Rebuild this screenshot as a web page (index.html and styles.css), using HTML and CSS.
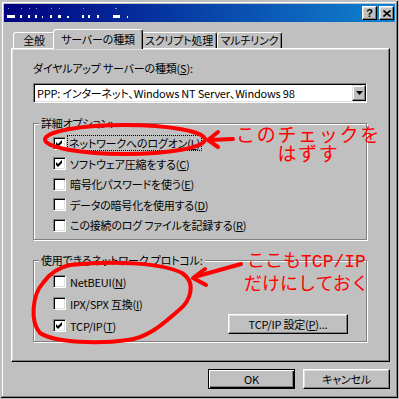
FILE: index.html
```html
<!DOCTYPE html>
<html lang="ja">
<head>
    <meta charset="UTF-8">
    <title>ダイヤルアップ接続のプロパティ</title>
    <link rel="stylesheet" href="styles.css">
</head>
<body>
    <div class="window">
        <!-- title bar, caption is blurred out in the original -->
        <div class="titlebar">
            <svg class="mosaic" width="130" height="14" viewBox="0 0 130 14">
                <g fill="#fff">
                    <rect x="3" y="9" width="8" height="3"/>
                    <rect x="16" y="9" width="2" height="3"/>
                    <rect x="24" y="9" width="2" height="3"/>
                    <rect x="31" y="9" width="2" height="3"/>
                    <rect x="38" y="10" width="1" height="2"/>
                    <rect x="46" y="9" width="2" height="3"/>
                    <rect x="54" y="9" width="3" height="3"/>
                    <rect x="63" y="10" width="2" height="2"/>
                    <rect x="78" y="9" width="2" height="3"/>
                    <rect x="84" y="9" width="2" height="3"/>
                    <rect x="93" y="9" width="2" height="3"/>
                    <rect x="109" y="9" width="7" height="3"/>
                    <rect x="123" y="10" width="1" height="2"/>
                </g>
                <g fill="#7f8fc8">
                    <rect x="4" y="2" width="1" height="1"/>
                    <rect x="17" y="2" width="1" height="1"/>
                    <rect x="25" y="2" width="1" height="1"/>
                    <rect x="32" y="2" width="1" height="1"/>
                    <rect x="47" y="2" width="1" height="1"/>
                    <rect x="55" y="2" width="1" height="1"/>
                    <rect x="79" y="2" width="1" height="1"/>
                    <rect x="111" y="2" width="2" height="1"/>
                </g>
            </svg>
            <div class="title-buttons">
                <span class="tbtn">?</span>
                <span class="tbtn">
                    <svg width="8" height="7" viewBox="0 0 8 7"><path d="M0.5 0.5 L7.5 6.5 M7.5 0.5 L0.5 6.5" stroke="#000" stroke-width="1.6" fill="none"/></svg>
                </span>
            </div>
        </div>

        <div class="content">
            <div class="tabs">
                <div class="tab tab-general">全般</div>
                <div class="tab tab-server active">サーバーの種類</div>
                <div class="tab tab-script">スクリプト処理</div>
                <div class="tab tab-multi">マルチリンク</div>
            </div>

            <div class="panel">
                <div class="field-label">ダイヤルアップ サーバーの種類(<u>S</u>):</div>
                <div class="select">
                    <span class="select-value">PPP: インターネット、Windows NT Server、Windows 98</span>
                    <span class="drop-btn">
                        <svg width="7" height="4" viewBox="0 0 7 4"><polygon points="0,0 7,0 3.5,4" fill="#000"/></svg>
                    </span>
                </div>

                <div class="group">
                    <div class="group-title">詳細オプション:</div>
                    <div class="check-list">
                        <div class="check"><span class="box"><svg width="11" height="11" viewBox="0 0 11 11"><polygon points="2,4 4,6 8,2 8,5 4,9 2,7" fill="#000"/></svg></span><span class="focus">ネットワークへのログオン(<u>L</u>)</span></div>
                        <div class="check"><span class="box"><svg width="11" height="11" viewBox="0 0 11 11"><polygon points="2,4 4,6 8,2 8,5 4,9 2,7" fill="#000"/></svg></span><span>ソフトウェア圧縮をする(<u>C</u>)</span></div>
                        <div class="check"><span class="box"></span><span>暗号化パスワードを使う(<u>E</u>)</span></div>
                        <div class="check"><span class="box"></span><span>データの暗号化を使用する(<u>D</u>)</span></div>
                        <div class="check"><span class="box"></span><span>この接続のログ ファイルを記録する(<u>R</u>)</span></div>
                    </div>
                </div>

                <div class="group group-proto">
                    <div class="group-title">使用できるネットワーク プロトコル:</div>
                    <div class="proto-body">
                        <div class="check-list">
                            <div class="check"><span class="box"></span><span>NetBEUI(<u>N</u>)</span></div>
                            <div class="check"><span class="box"></span><span>IPX/SPX 互換(<u>I</u>)</span></div>
                            <div class="check"><span class="box"><svg width="11" height="11" viewBox="0 0 11 11"><polygon points="2,4 4,6 8,2 8,5 4,9 2,7" fill="#000"/></svg></span><span>TCP/IP(<u>T</u>)</span></div>
                        </div>
                        <div class="btn btn-tcp">TCP/IP 設定(<u>P</u>)...</div>
                    </div>
                </div>
            </div>

            <div class="actions">
                <div class="btn btn-default">OK</div>
                <div class="btn">キャンセル</div>
            </div>
        </div>
    </div>

    <!-- red hand-drawn notes on top of the screenshot -->
    <svg class="marks" width="399" height="399" viewBox="0 0 399 399">
        <g fill="none" stroke="#f00" stroke-width="4" stroke-linecap="round" stroke-linejoin="round">
            <ellipse cx="125" cy="139.5" rx="80" ry="14.5"/>
            <path d="M233 139 L210 140"/>
            <path d="M218 132 L208 140 L218 147"/>
            <path d="M70 265 C110 261 160 262 182 273 C196 282 192 300 178 311 C165 322 150 337 128 340 C100 344 55 343 40 333 C30 322 32 295 43 283 C50 273 60 267 70 265 Z"/>
            <path d="M241 264 L198 276"/>
            <path d="M205 269 L193 278 L206 285"/>
        </g>
    </svg>
    <div class="note note-check">
        <div>このチェックを</div>
        <div>はずす</div>
    </div>
    <div class="note note-proto">
        <div>ここも<span class="mono">TCP/IP</span></div>
        <div>だけにしておく</div>
    </div>
</body>
</html>
```

FILE: styles.css
```css
/* Win98 style dialog */
body {
    margin: 0;
    padding: 1px;
    width: 399px;
    height: 399px;
    box-sizing: border-box;
    position: relative;
    overflow: hidden;
    background: #c0c0c0;
    font-family: "Noto Sans CJK JP", sans-serif;
    font-size: 11px;
    letter-spacing: -0.2px;
    font-feature-settings: "palt";
    color: #000;
}
u {
    text-underline-offset: 1px;
}
.window {
    height: 397px;
    box-sizing: border-box;
    padding: 3px;
    box-shadow: inset -1px -1px #000, inset 1px 1px #c0c0c0, inset -2px -2px #808080, inset 2px 2px #fff;
}
.titlebar {
    height: 18px;
    display: flex;
    align-items: center;
    justify-content: space-between;
    padding: 0 1px 0 0;
    background: linear-gradient(90deg, #000080, #1084d0);
}
.mosaic {
    display: block;
}
.title-buttons {
    display: flex;
    gap: 2px;
}
.tbtn {
    width: 15px;
    height: 14px;
    box-sizing: border-box;
    display: flex;
    align-items: center;
    justify-content: center;
    background: #c0c0c0;
    border: 1px solid;
    border-color: #fff #000 #000 #fff;
    box-shadow: inset -1px -1px #808080, inset 1px 1px #dfdfdf;
    font-family: "Liberation Sans", sans-serif;
    font-weight: bold;
    font-size: 11px;
    line-height: 12px;
}
.content {
    padding: 0 5px 0 7px;
}
.tabs {
    display: flex;
    align-items: flex-end;
    padding: 7px 0 0 2px;
}
.tab {
    height: 16px;
    box-sizing: border-box;
    text-align: center;
    line-height: 14px;
    background: #c0c0c0;
    border: 1px solid;
    border-color: #fff #000 transparent #fff;
    border-bottom: none;
    border-radius: 3px 3px 0 0;
    box-shadow: inset -1px 0 #808080;
}
.tab-general { width: 42px; }
.tab-server { width: 86px; }
.tab-script { width: 76px; }
.tab-multi { width: 65px; }
.tab.active {
    width: 90px;
    height: 20px;
    margin: 0 -2px -1px;
    padding-top: 2px;
    position: relative;
    z-index: 1;
}
.panel {
    height: 314px;
    box-sizing: border-box;
    padding: 12px 22px 0 21px;
    border: 1px solid;
    border-color: #fff #000 #000 #fff;
    box-shadow: inset -1px -1px #808080, inset 1px 1px #dfdfdf;
}
.field-label {
    line-height: 14px;
}
.select {
    margin-top: 8px;
    height: 20px;
    box-sizing: border-box;
    display: flex;
    align-items: center;
    padding-left: 3px;
    background: #fff;
    border: 1px solid;
    border-color: #808080 #fff #fff #808080;
    box-shadow: inset 1px 1px #000, inset -1px -1px #dfdfdf;
}
.drop-btn {
    margin-left: auto;
    width: 14px;
    height: 16px;
    box-sizing: border-box;
    display: flex;
    align-items: center;
    justify-content: center;
    background: #c0c0c0;
    border: 1px solid;
    border-color: #dfdfdf #000 #000 #dfdfdf;
    box-shadow: inset -1px -1px #808080, inset 1px 1px #fff;
}
.group {
    margin-top: 20px;
    padding-bottom: 3.5px;
    border: 1px solid #808080;
    box-shadow: 1px 1px #fff, inset 1px 1px #fff;
}
.group-title {
    width: fit-content;
    margin: -8px 0 0 5px;
    padding: 0 2px;
    line-height: 14px;
    background: #c0c0c0;
}
.check-list {
    margin: 3px 0 0 19px;
}
.check {
    height: 20.5px;
    display: flex;
    align-items: center;
    gap: 4px;
    line-height: 12px;
}
.box {
    width: 13px;
    height: 13px;
    box-sizing: border-box;
    flex: none;
    background: #fff;
    border: 1px solid;
    border-color: #808080 #fff #fff #808080;
    box-shadow: inset 1px 1px #000, inset -1px -1px #dfdfdf;
}
.box svg {
    display: block;
}
.focus {
    margin-left: -2px;
    padding: 1px 1px;
    outline: 1px dotted #000;
}
.group-proto {
    padding-bottom: 4.5px;
}
.proto-body {
    display: flex;
    align-items: flex-end;
    justify-content: space-between;
    padding-right: 18px;
}
.proto-body .check-list {
    margin-top: 3.5px;
}
.group-proto .check {
    height: 22px;
}
.btn {
    width: 87px;
    height: 20px;
    box-sizing: border-box;
    display: flex;
    align-items: center;
    justify-content: center;
    background: #c0c0c0;
    border: 1px solid;
    border-color: #fff #000 #000 #fff;
    box-shadow: inset -1px -1px #808080, inset 1px 1px #dfdfdf;
    line-height: 12px;
}
.btn-tcp {
    width: 120px;
    margin-bottom: 3px;
}
.btn-default {
    border-color: #000;
    box-shadow: inset 1px 1px #fff, inset -1px -1px #000, inset -2px -2px #808080;
}
.actions {
    display: flex;
    justify-content: flex-end;
    gap: 8px;
    margin-top: 7px;
}
.marks {
    position: absolute;
    top: 0;
    left: 0;
    pointer-events: none;
}
.note {
    position: absolute;
    color: #f00;
    text-align: center;
    font-feature-settings: normal;
    white-space: nowrap;
}
.note-check {
    left: 236px;
    top: 124px;
    font-size: 19px;
    line-height: 19px;
    letter-spacing: 1.7px;
}
.note-proto {
    left: 244px;
    top: 249px;
    font-size: 18px;
    line-height: 20px;
    letter-spacing: 0;
}
.mono {
    font-family: "Liberation Mono", monospace;
}
```
